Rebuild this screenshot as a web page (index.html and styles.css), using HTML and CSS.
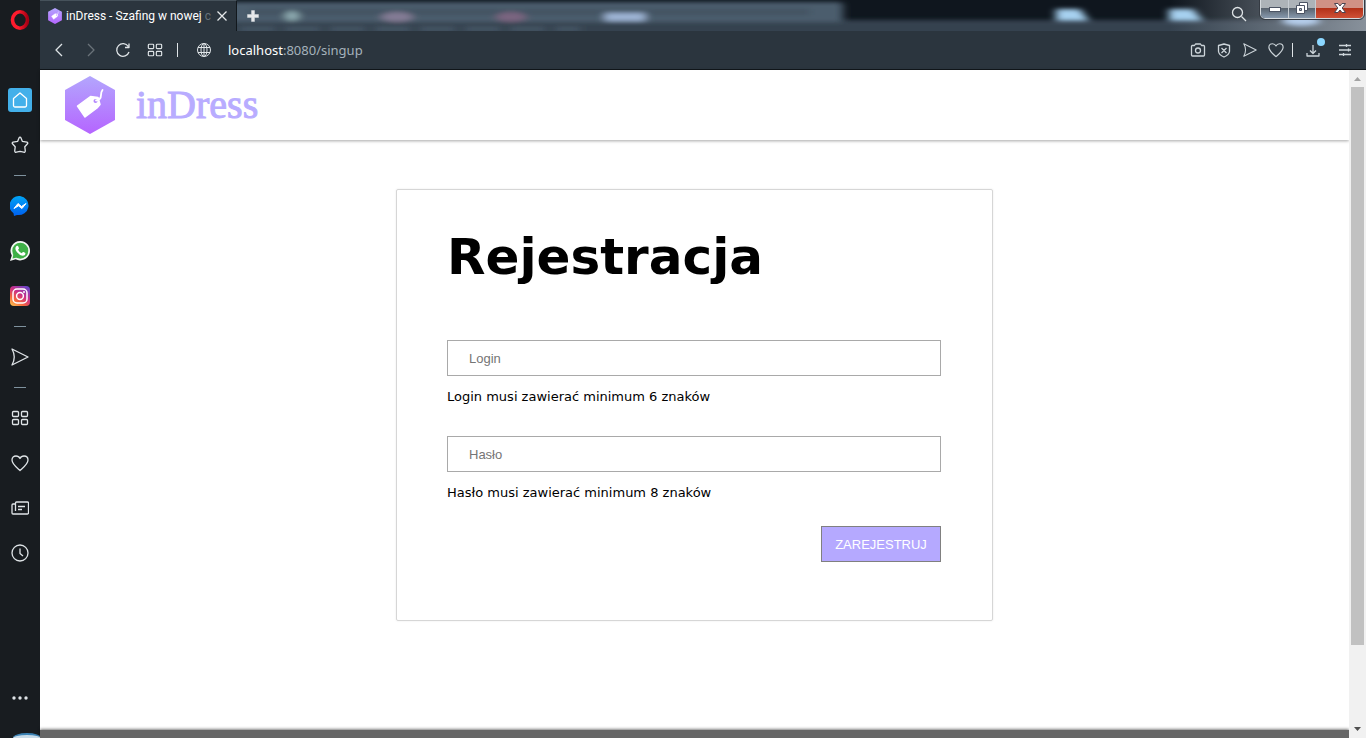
FILE: index.html
```
<!DOCTYPE html>
<html lang="pl">
<head>
<meta charset="utf-8">
<title>inDress - Szafing w nowej odsłonie</title>
<link rel="stylesheet" href="styles.css">
</head>
<body class="browser">
<svg class="defs" width="0" height="0" aria-hidden="true">
  <defs>
    <linearGradient id="hex" x1="0" y1="0" x2="0" y2="1"><stop offset="0" stop-color="#b3a6fd"/><stop offset="1" stop-color="#b565ff"/></linearGradient>
    <linearGradient id="opera" x1="0" y1="0" x2="1" y2="0"><stop offset=".4" stop-color="#ff1b2d"/><stop offset="1" stop-color="#a70014"/></linearGradient>
    <linearGradient id="msg" x1="0" y1="0" x2="0" y2="1"><stop offset="0" stop-color="#00a4f5"/><stop offset="1" stop-color="#0060f0"/></linearGradient>
    <linearGradient id="insta" x1="0.1" y1="1" x2="0.8" y2="0"><stop offset="0" stop-color="#fdc04f"/><stop offset=".3" stop-color="#f4633d"/><stop offset=".6" stop-color="#cb2f88"/><stop offset="1" stop-color="#6a45c8"/></linearGradient>
    <symbol id="logo" viewBox="0 0 50 58">
      <path d="M25 0 50 14V44L25 58 0 44V14Z" fill="url(#hex)"/>
      <path d="M12.500 30 25.500 20.500 33 21.500 35 28.500 32 32 20 41Z" fill="#fff" stroke="#fff" stroke-width="1.500" stroke-linejoin="round"/>
      <circle cx="30.500" cy="25" r="2" fill="#b387fd"/>
      <path d="M31 24.500Q36 24 36 19 36 16 37.500 14" fill="none" stroke="#fff" stroke-width="1.800" stroke-linecap="round"/>
    </symbol>
    <symbol id="heart" viewBox="0 0 18 18"><path d="M9 16.500C5 13 1 10 1 6 1 3.500 2.800 2 5 2 7 2 8.300 3 9 4.500 9.700 3 11 2 13 2 15.200 2 17 3.500 17 6 17 10 13 13 9 16.500Z"/></symbol>
    <symbol id="plane" viewBox="0 0 18 18"><path d="M1 1 17 9 1 17Q5.500 9 1 1Z"/></symbol>
    <symbol id="tiles" viewBox="0 0 18 18"><rect x="1.500" y="2.500" width="6" height="5" rx="1"/><rect x="10.500" y="2.500" width="6" height="5" rx="1"/><rect x="1.500" y="10.500" width="6" height="5" rx="1"/><rect x="10.500" y="10.500" width="6" height="5" rx="1"/></symbol>
  </defs>
</svg>

<aside class="sidebar">
  <button class="opera" aria-label="Menu Opera"><svg width="20" height="20" viewBox="0 0 20 20"><ellipse cx="10" cy="10" rx="7.500" ry="8.200" fill="none" stroke="url(#opera)" stroke-width="3.600"/></svg></button>
  <nav class="side-nav" aria-label="Panel boczny">
    <button class="side-item" aria-label="Start"><span class="home"><svg class="line" width="18" height="18" viewBox="0 0 18 18"><path d="M9 2 15.500 7.500V14.500A1.500 1.500 0 0 1 14 16H4A1.500 1.500 0 0 1 2.500 14.500V7.500Z"/></svg></span></button>
    <button class="side-item" aria-label="Zakładki"><svg class="line" width="18" height="18" viewBox="0 0 18 18"><path d="M9 1.200Q9.700 1.200 10 2L11.300 5.300 16 6.200Q17.300 6.700 16.500 7.800L13.800 10.800 14.300 15Q14 16.700 12.600 16.200L9 15.400 5.400 16.200Q4 16.700 3.700 15L4.200 10.800 1.500 7.800Q.7 6.700 2 6.200L6.700 5.300 8 2Q8.300 1.200 9 1.200Z"/></svg></button>
    <span class="rule"></span>
    <button class="side-item" aria-label="Messenger"><svg width="20" height="20" viewBox="0 0 20 20"><path d="M10 0A10 9.600 0 1 1 7 19L4 20 3.500 17.200A10 9.600 0 0 1 10 0Z" fill="url(#msg)"/><path d="M4 12.500 8 7.500 11.500 10.500 16 7.500 12 12.500 8.500 9.800Z" fill="#fff" stroke="#fff"/></svg></button>
    <button class="side-item" aria-label="WhatsApp"><svg width="20" height="20" viewBox="0 0 20 20"><path d="M10.300 0A9.700 9.700 0 1 1 5.600 18.200L0 20 1.800 14.500A9.700 9.700 0 0 1 10.300 0Z" fill="#f4f7f4"/><circle cx="10.300" cy="9.700" r="8" fill="#3fb047"/><path d="M2.500 17.500 3.500 13 7 16.500Z" fill="#3fb047"/><path d="M6.500 5Q8 4.200 8.300 5.500L9 7.200Q9 8 8 8.800 9.300 11.300 11.700 12.200L12.900 11Q13.200 10.800 13.600 11L15.400 12Q15.700 14.500 12.800 14.700 9.500 14.500 7 11.300 4 7.500 6.500 5Z" fill="#fff"/></svg></button>
    <button class="side-item" aria-label="Instagram"><svg width="20" height="20" viewBox="0 0 20 20"><rect width="20" height="20" rx="4" fill="url(#insta)"/><rect x="3" y="3" width="14" height="14" rx="4" fill="none" stroke="#fff" stroke-width="1.500"/><circle cx="10" cy="10" r="3.400" fill="none" stroke="#fff" stroke-width="1.500"/><circle cx="14" cy="6" r="1" fill="#fff"/></svg></button>
    <span class="rule"></span>
    <button class="side-item" aria-label="Mój Flow"><svg class="line" width="18" height="18"><use href="#plane"/></svg></button>
    <span class="rule"></span>
    <button class="side-item" aria-label="Szybki wybór"><svg class="line" width="18" height="18"><use href="#tiles"/></svg></button>
    <button class="side-item" aria-label="Ulubione"><svg class="line" width="18" height="18"><use href="#heart"/></svg></button>
    <button class="side-item" aria-label="Wiadomości"><svg class="line" width="18" height="18" viewBox="0 0 18 18"><path d="M4.500 12V4A1 1 0 0 1 5.500 3H16.500A1 1 0 0 1 17.500 4V14A1 1 0 0 1 16.500 15H2A1 1 0 0 1 1 14V6A1 1 0 0 1 2 5H4.500M7 7.500H14M7 10.500H11"/></svg></button>
    <button class="side-item" aria-label="Historia"><svg class="line" width="18" height="18" viewBox="0 0 18 18"><circle cx="9" cy="9" r="8"/><path d="M9 4.500V9.500L12 12"/></svg></button>
  </nav>
  <button class="side-item more" aria-label="Więcej"><svg width="18" height="4" fill="#dfe3e6"><circle cx="3" cy="2" r="1.700"/><circle cx="9" cy="2" r="1.700"/><circle cx="15" cy="2" r="1.700"/></svg></button>
  <span class="orb"></span>
</aside>

<div class="window">
  <div class="tabbar">
    <svg class="glass" preserveAspectRatio="none" viewBox="0 0 1326 31" aria-hidden="true">
      <defs><filter id="b5" x="-20%" y="-60%" width="140%" height="220%"><feGaussianBlur stdDeviation="4 2"/></filter>
      <linearGradient id="corner"><stop offset="0" stop-color="#88919b" stop-opacity="0"/><stop offset="1" stop-color="#88919b"/></linearGradient></defs>
      <rect width="1326" height="31" fill="#0f161e"/>
      <g filter="url(#b5)">
        <rect x="-10" y="20" width="1346" height="20" fill="#34424f"/>
        <rect x="-10" y="2" width="813" height="20" rx="4" fill="#4c5d6d"/>
        <rect x="210" y="9" width="560" height="6" fill="#435362"/>
        <ellipse cx="252" cy="16" rx="7" ry="5" fill="#8daab0"/>
        <ellipse cx="357" cy="17" rx="16" ry="5" fill="#837b94"/>
        <ellipse cx="471" cy="17" rx="15" ry="5" fill="#7a6580"/>
        <rect x="565" y="13" width="40" height="8" fill="#9db4d4"/>
        <path d="M200 29H540" stroke="#475867" stroke-width="4" stroke-dasharray="35 10"/>
      </g>
      <rect x="1130" width="196" height="31" fill="url(#corner)"/>
      <g filter="url(#b5)"><path d="M1016 9H1040L1049 21H1016ZM1129 9H1153L1163 21H1129Z" fill="#a6d0ef"/><ellipse cx="1261" cy="21" rx="19" ry="5" fill="#b4ccea"/></g>
    </svg>
    <div class="tab">
      <svg class="favicon" width="16" height="16"><use href="#logo"/></svg>
      <span class="tab-title">inDress - Szafing w nowej <span class="fade">c</span></span>
      <button class="tab-close" aria-label="Zamknij kartę"><svg width="10" height="10" viewBox="0 0 10 10"><path d="M.5.5 9.500 9.500M9.500.5.5 9.500" stroke="#e6e9eb" stroke-width="1.300"/></svg></button>
    </div>
    <button class="new-tab" aria-label="Nowa karta"><svg width="12" height="12" viewBox="0 0 12 12"><path d="M4.500.5H7.500V4.500H11.500V7.500H7.500V11.500H4.500V7.500H.5V4.500H4.500Z" fill="#e6e8ea" stroke="#e6e8ea" stroke-width=".4"/></svg></button>
    <button class="tab-search" aria-label="Szukaj kart"><svg class="line" width="16" height="16" viewBox="0 0 16 16"><circle cx="6.500" cy="6.500" r="5"/><path d="M10.500 10.500 15 15"/></svg></button>
    <div class="caption">
      <button class="cap min" aria-label="Minimalizuj"><svg width="12" height="6"><rect x=".5" y="1.500" width="11" height="4" fill="#fff" stroke="#4b5363"/></svg></button>
      <button class="cap" aria-label="Przywróć"><svg width="12" height="12" viewBox="0 0 12 12"><path d="M3.500.5H11.500V8.500H3.500Z" fill="#fff" stroke="#4b5363"/><path d="M.5 3.500H8.500V11.500H.5Z" fill="#fff" stroke="#4b5363"/><path d="M3.500 6.500H5.500V8.500H3.500Z" fill="#b9c0c9" stroke="#4b5363"/></svg></button>
      <button class="cap close" aria-label="Zamknij"><svg width="12" height="10" viewBox="0 0 12 10"><path d="M.5.500H4L6 3 8 .5H11.500L8.200 5 11.500 9.500H8L6 7 4 9.500H.5L3.800 5Z" fill="#fff" stroke="#4b4450"/></svg></button>
    </div>
  </div>

  <div class="toolbar">
    <button class="tool" aria-label="Wstecz"><svg class="line" width="16" height="16" viewBox="0 0 16 16"><path d="M11 2 5 8 11 14"/></svg></button>
    <button class="tool off" aria-label="Dalej"><svg class="line" width="16" height="16" viewBox="0 0 16 16"><path d="M5 2 11 8 5 14"/></svg></button>
    <button class="tool" aria-label="Odśwież"><svg class="line" width="16" height="16" viewBox="0 0 16 16"><path d="M14 10A6.300 6.300 0 1 1 13.300 4.500M14 1.500V5.500H10"/></svg></button>
    <button class="tool" aria-label="Szybki wybór"><svg class="line" width="16" height="16"><use href="#tiles"/></svg></button>
    <span class="divider left"></span>
    <button class="tool globe" aria-label="Informacje o stronie"><svg class="line thin" width="16" height="16" viewBox="0 0 16 16"><circle cx="8" cy="8" r="6.500"/><ellipse cx="8" cy="8" rx="3" ry="6.500"/><path d="M2 5.500H14M2 10.500H14M8 1.500V14.500"/></svg></button>
    <div class="address"><span class="host">localhost</span>:8080/singup</div>
    <div class="actions">
      <button class="act" aria-label="Zrzut ekranu"><svg class="line" width="16" height="16" viewBox="0 0 16 16"><path d="M2 3.500H4.500L5.500 2H10.500L11.500 3.500H14A1 1 0 0 1 14.500 4.500V13A1 1 0 0 1 13.500 14H2.500A1 1 0 0 1 1.500 13V4.500A1 1 0 0 1 2 3.500Z"/><circle cx="8" cy="8.500" r="2.500"/></svg></button>
      <button class="act" aria-label="Blokowanie reklam"><svg class="line" width="16" height="16" viewBox="0 0 16 16"><path d="M8 2 13.500 3.500V9.500Q13 13 8 15 3 13 2.500 9.500V3.500ZM5.500 6 10.500 11M10.500 6 5.500 11"/></svg></button>
      <button class="act" aria-label="Wyślij do Flow"><svg class="line" width="14" height="14"><use href="#plane"/></svg></button>
      <button class="act" aria-label="Dodaj do ulubionych"><svg class="line" width="16" height="16"><use href="#heart"/></svg></button>
      <span class="divider"></span>
      <button class="act download" aria-label="Pobrane"><svg class="line" width="16" height="16" viewBox="0 0 16 16"><path d="M8 3V11.500M5 8.500 8 11.500 11 8.500M2 11V14H14V11"/></svg><span class="dot"></span></button>
      <button class="act settings" aria-label="Ustawienia"><svg class="line" width="14" height="14" viewBox="0 0 14 14"><path d="M1 2.500H13M1 7H13M1 11.500H13M8.500 1V4M10.500 5.500V8.500M5.500 10V13"/></svg></button>
    </div>
  </div>

  <div class="viewport">
    <div class="page">
      <header class="site-header">
        <a class="brand" href="#"><svg width="50" height="58"><use href="#logo"/></svg><span class="wordmark">inDress</span></a>
      </header>
      <main class="content">
        <form class="card">
          <h1 class="title">Rejestracja</h1>
          <div class="field">
            <input class="text" type="text" placeholder="Login" aria-label="Login" aria-describedby="login-hint">
            <p class="hint" id="login-hint">Login musi zawierać minimum 6 znaków</p>
          </div>
          <div class="field">
            <input class="text" type="password" placeholder="Hasło" aria-label="Hasło" aria-describedby="pass-hint">
            <p class="hint" id="pass-hint">Hasło musi zawierać minimum 8 znaków</p>
          </div>
          <button class="submit" type="button">ZAREJESTRUJ</button>
        </form>
      </main>
      <footer class="site-footer"></footer>
    </div>
    <div class="scrollbar" aria-hidden="true">
      <svg class="arrow" width="17" height="17"><path d="M5 11H12L8.500 7Z" fill="#a3a3a3"/></svg>
      <span class="track"><span class="thumb"></span></span>
      <svg class="arrow" width="17" height="17"><path d="M5 6H12L8.500 10Z" fill="#505050"/></svg>
    </div>
  </div>
</div>
</body>
</html>
```

FILE: styles.css
```
* { box-sizing: border-box; }

button {
  margin: 0;
  padding: 0;
  border: 0;
  background: none;
  display: flex;
  align-items: center;
  justify-content: center;
}

svg { display: block; flex: none; }

.defs { position: absolute; }

.line {
  fill: none;
  stroke: #dfe4e7;
  stroke-width: 1.3;
  stroke-linejoin: round;
}

.thin { stroke-width: 1; }

.browser {
  margin: 0;
  height: 100vh;
  display: flex;
  overflow: hidden;
  background: #fff;
  font-family: "DejaVu Sans", Verdana, sans-serif;
}

/* Sidebar */
.sidebar {
  flex: none;
  width: 40px;
  display: flex;
  flex-direction: column;
  background: #181c20;
  overflow: hidden;
}

.opera { height: 40px; }
.side-nav { margin-top: 37px; display: flex; flex-direction: column; }
.side-item { width: 40px; height: 45px; flex: none; }

.home {
  width: 24px;
  height: 24px;
  border-radius: 3px;
  background: #43b0ea;
  display: flex;
  align-items: center;
  justify-content: center;
}

.home .line { stroke: #fff; }

.rule {
  width: 12px;
  height: 1px;
  margin: 8px auto 7px;
  background: #7f929e;
}

.more { margin-top: auto; }

.orb {
  flex: none;
  width: 28px;
  height: 5px;
  margin: 13px 0 0 13px;
  border-top: 2px solid #3c83b5;
  border-radius: 14px 14px 0 0 / 5px 5px 0 0;
  background: #c8dbe8;
}

/* Browser chrome */
.window {
  flex: 1;
  min-width: 0;
  display: flex;
  flex-direction: column;
}

.tabbar {
  position: relative;
  flex: none;
  height: 31px;
  display: flex;
  align-items: flex-start;
}

.glass {
  position: absolute;
  inset: 0;
  width: 100%;
  height: 100%;
}

.tab, .new-tab, .tab-search, .caption { position: relative; }

.tab {
  width: 197px;
  height: 31px;
  padding: 0 8px 0 7px;
  display: flex;
  align-items: center;
  gap: 3px;
  border-top: 1px solid #46525b;
  border-right: 1px solid #12181d;
  background: #2b353e;
}

.tab-title {
  flex: 1;
  white-space: nowrap;
  font: 12px/16px "Roboto", sans-serif;
  color: #fff;
}

.fade { color: #66717a; }

.tab-close { width: 12px; height: 16px; }
.new-tab { width: 31px; height: 31px; }
.tab-search { width: 24px; height: 28px; margin-left: auto; margin-right: 9px; }

.caption {
  height: 19px;
  margin-right: 2px;
  display: flex;
  border: 1px solid #d5dade;
  border-top: 0;
  border-radius: 0 0 5px 5px;
  outline: 1px solid #353b43;
  overflow: hidden;
}

.cap {
  width: 27px;
  height: 18px;
  padding-bottom: 3px;
  border-right: 1px solid #c6ccd2;
  background: linear-gradient(#adb3b8 0 45%, #59636e 46%, #8799ad);
}

.min { width: 28px; padding-bottom: 0; }

.close {
  width: 47px;
  border-right: 0;
  background: linear-gradient(#d09185 0 45%, #b23119 46%, #cf5137);
}

.toolbar {
  flex: none;
  height: 39px;
  padding: 0 11px;
  display: flex;
  align-items: center;
  background: #2b353e;
  border-bottom: 1px solid #12171b;
}

.tool { width: 16px; height: 24px; margin-right: 16px; }
.off { opacity: 0.35; }

.divider {
  width: 1px;
  height: 14px;
  background: #dfe4e7;
}

.left { margin: 0 18px 0 -2px; }

.address {
  flex: 1;
  font: 13px/20px "Noto Sans", sans-serif;
  color: #a5b2bb;
}

.host { color: #fff; }
.actions { display: flex; align-items: center; }
.act { width: 26px; height: 24px; }
.actions .line { stroke: #cdd5da; }
.actions .divider { margin: 0 4px 0 3px; }
.download { position: relative; width: 32px; }

.dot {
  position: absolute;
  top: 0;
  right: 4px;
  width: 8px;
  height: 8px;
  border-radius: 50%;
  background: #8bd7ff;
}

.settings { width: 32px; margin-right: -6px; }

/* Web page */
.viewport { flex: 1; min-height: 0; display: flex; }

.page {
  flex: 1;
  min-width: 0;
  display: flex;
  flex-direction: column;
}

.site-header {
  height: 70px;
  padding: 0 25px;
  display: flex;
  align-items: center;
  box-shadow: 0 1px 3px rgba(0, 0, 0, 0.35);
}

.brand {
  display: flex;
  align-items: center;
  gap: 21px;
  color: #b8acff;
  text-decoration: none;
}

.wordmark {
  font: 40px/44px "Liberation Serif", serif;
  -webkit-text-stroke: 1px #b8acff;
}

.content {
  flex: 1;
  padding: 49px 24px;
}

.card {
  width: 100%;
  max-width: 597px;
  margin: 0 auto;
  padding: 34px 51px 58px 50px;
  display: flex;
  flex-direction: column;
  border: 1px solid #d6d6d6;
  border-radius: 2px;
  box-shadow: 0 0 2px rgba(0, 0, 0, 0.1);
}

.title {
  margin: 0 0 50px;
  font-size: 50px;
  line-height: 66px;
}

.field { margin-bottom: 31px; }

.text {
  display: block;
  width: 100%;
  height: 36px;
  padding: 0 21px;
  border: 1px solid #a9a9a9;
  background: #fff;
  font: 13px "Liberation Sans", Arial, sans-serif;
}

.text::placeholder { color: #757575; }

.hint {
  margin: 12px 0 0;
  font-size: 13px;
  line-height: 17px;
}

.submit {
  align-self: flex-end;
  width: 120px;
  height: 36px;
  margin-top: -6px;
  border: 1px solid #808080;
  background: #b5a9ff;
  color: #fff;
  font: 13px "Liberation Sans", Arial, sans-serif;
}

.site-footer {
  flex: none;
  height: 8px;
  background: #666;
  box-shadow: 0 -1px 3px rgba(0, 0, 0, 0.5);
}

.scrollbar {
  flex: none;
  width: 17px;
  display: flex;
  flex-direction: column;
  background: #f1f1f1;
}

.track { flex: 1; padding: 0 2px; }

.thumb {
  display: block;
  height: 88%;
  background: #c1c1c1;
}
```
